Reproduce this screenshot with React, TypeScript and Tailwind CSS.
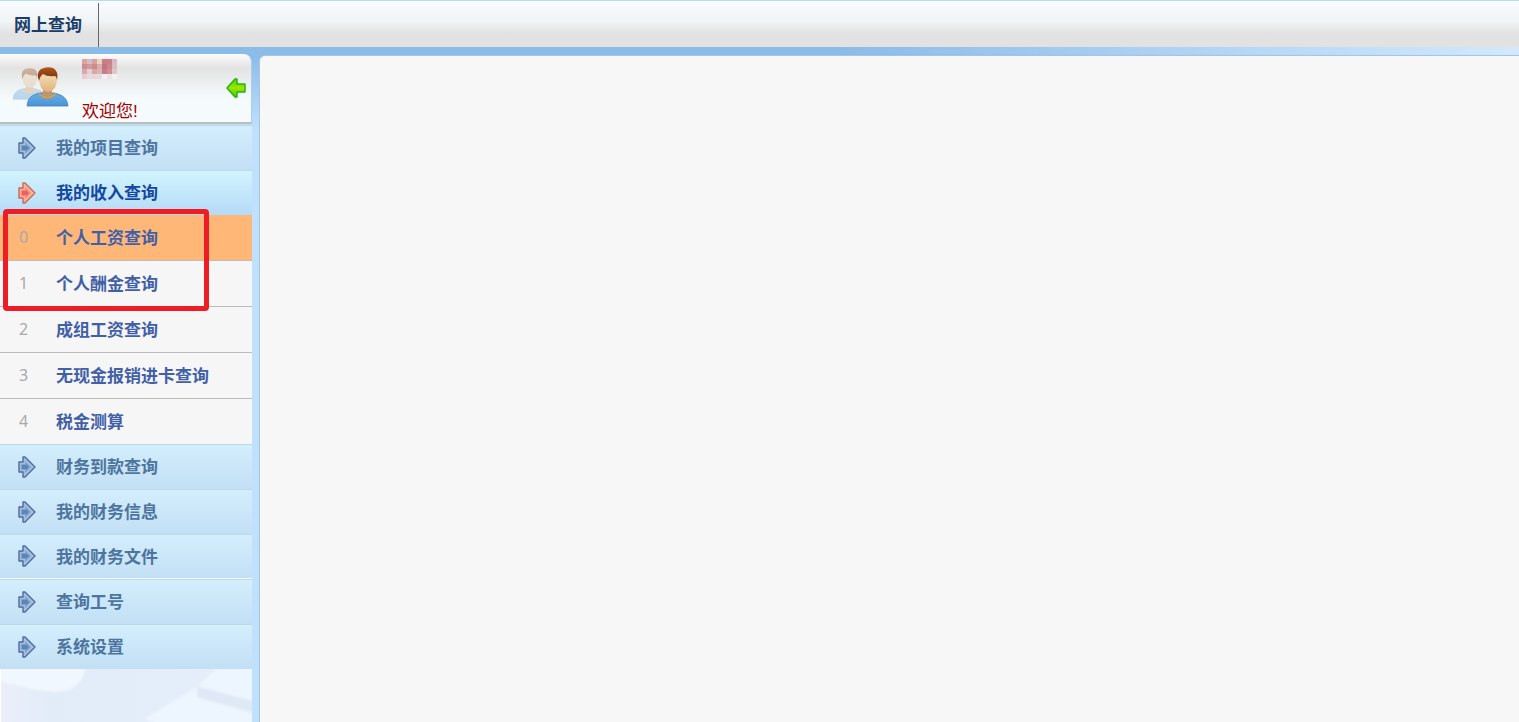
import React, { useState } from 'react';
import { clsx } from 'clsx';

interface MenuGroup {
  label: string;
  children?: string[];
  className?: string;
}

const menu: MenuGroup[] = [
  { label: '我的项目查询' },
  {
    label: '我的收入查询',
    children: ['个人工资查询', '个人酬金查询', '成组工资查询', '无现金报销进卡查询', '税金测算'],
  },
  { label: '财务到款查询' },
  { label: '我的财务信息' },
  { label: '我的财务文件', className: 'border-b border-b-white' },
  { label: '查询工号' },
  { label: '系统设置' },
];

// blurred name, one entry per 5px block
const nameBlocks = [
  ['#dba5a0', '#d6bcc5', '#d3a3a3', '#e8d3c4', '#cb7d84', '#cc7f88', '#dab9c0'],
  ['#cb8d8f', '#cf9ba1', '#cb8d84', '#d9aeb0', '#c4737f', '#c9868c', '#d9bdc3'],
  ['#d6a9b4', '#e6ced2', '#d5a9a9', '#dcb4b0', '#c97b88', '#cf8f94', '#dfc6ca'],
  ['#e8cdd0', '#ead9d9', '#ead6da', '#e8d9db', '#f3f0f1', '#ece3e4', '#f3f1f1'],
];

const MosaicName = () => (
  <svg width="35" height="20" viewBox="0 0 35 20" shapeRendering="crispEdges" aria-hidden="true">
    {nameBlocks.map((row, y) =>
      row.map((color, x) => (
        <rect key={`${x}-${y}`} x={x * 5} y={y * 5} width="5" height="5" fill={color} />
      ))
    )}
  </svg>
);

const Person = () => (
  <>
    <path d="M0 39 C1 31 4 28 13 26 L27 26 C36 28 40 31 41 39 Z" fill="url(#shirt)" stroke="#3d80bd" strokeWidth="0.8" />
    <path d="M12 26 Q20 33 29 26 L29 28 Q20 35 12 28Z" fill="#f39a1c" />
    <path d="M16 21 H25 V27 Q20 31 16 27Z" fill="#c9935f" />
    <path d="M12 9 Q12 3 20 3 Q30 3 30 10 Q30 18 27 22 Q21 28 15 22 Q12 18 12 9Z" fill="url(#face)" />
    <path d="M12 14 Q9 5 14 2 Q20 -1 26 1 Q32 4 30 14 Q30 10 28 9 Q20 10 16 7 Q13 9 12 14Z" fill="url(#hair)" />
  </>
);

const UsersIcon = () => (
  <svg width="56" height="42" viewBox="0 0 56 42" aria-hidden="true">
    <defs>
      <linearGradient id="shirt" x1="0" y1="0" x2="0" y2="1">
        <stop offset="0" stopColor="#68ace6" />
        <stop offset="1" stopColor="#4b94d3" />
      </linearGradient>
      <linearGradient id="hair" x1="0" y1="0" x2="0" y2="1">
        <stop offset="0" stopColor="#b0561c" />
        <stop offset="1" stopColor="#712c08" />
      </linearGradient>
      <linearGradient id="face" x1="0" y1="0" x2="0" y2="1">
        <stop offset="0" stopColor="#f9e5c2" />
        <stop offset="1" stopColor="#dfb27b" />
      </linearGradient>
    </defs>
    <g opacity="0.35" transform="translate(0 2) scale(.8)">
      <Person />
    </g>
    <g transform="translate(14 1)">
      <Person />
    </g>
  </svg>
);

const BackArrow = () => (
  <svg width="20" height="20" viewBox="0 0 20 20" aria-hidden="true">
    <defs>
      <linearGradient id="green" x1="0" y1="0" x2="0" y2="1">
        <stop offset="0" stopColor="#4fd400" />
        <stop offset="0.5" stopColor="#a0e600" />
        <stop offset="1" stopColor="#48c900" />
      </linearGradient>
    </defs>
    <path d="M1 10 L9 1 H11 V6 H19 V14 H11 V19 H9Z" fill="url(#green)" stroke="#22b518" strokeWidth="1.5" strokeLinejoin="round" />
  </svg>
);

const MenuArrow = ({ active }: { active: boolean }) => (
  <svg width="18" height="22" viewBox="0 0 18 22" className="mb-px" aria-hidden="true">
    <path
      d="M1 6 H5 V1 H7 L17 11 L7 21 H5 V16 H1Z"
      fill={active ? '#f5b3a3' : '#a3bfda'}
      stroke={active ? '#cc6a50' : '#4d6ba3'}
      strokeWidth="1.4"
      strokeLinejoin="round"
    />
    <path d="M3 8 H7 V5 L13 11 L7 17 V14 H3Z" fill={active ? '#f38b7c' : '#81a3cb'} />
    <path d="M4 9 H8 V8 L11 11 L8 14 V13 H4Z" fill={active ? '#f25f58' : '#5a85ba'} />
  </svg>
);

const Sidebar: React.FC = () => {
  const [openGroup, setOpenGroup] = useState('我的收入查询');
  const [selected, setSelected] = useState('个人工资查询');

  return (
    <aside className="flex w-[252px] shrink-0 flex-col bg-[#e6f0fb]">
      <div className="flex border-b border-[#bfe0ee] bg-[#8bbbe7]">
        <div className="flex h-[70px] flex-1 rounded-tr-lg border-r border-b-2 border-r-[#a9cdee] border-b-[#b9bdbf] bg-linear-to-b from-[#fcfcfc] via-[#e3e3e3] via-20% to-[#f5fafc] to-65% pl-[13px]">
          <div className="pt-3">
            <UsersIcon />
          </div>
          <div className="flex flex-1 flex-col justify-between pl-[13px] pt-[5px] text-[17px] leading-5 text-[#a40000]">
            <MosaicName />
            <span>欢迎您!</span>
          </div>
          <button type="button" aria-label="收起菜单" className="mr-[5px] self-center">
            <BackArrow />
          </button>
        </div>
      </div>

      <nav className="relative">
        {menu.map((group) => {
          const active = group.label === openGroup;
          return (
            <div key={group.label} className="last:-mb-px">
              <button
                type="button"
                onClick={() => setOpenGroup(active ? '' : group.label)}
                className={clsx(
                  'flex h-[45px] w-full items-center gap-5 border-t border-t-[#bcd8e4] bg-linear-to-b pl-[18px] text-[17px] font-bold',
                  active ? 'from-[#d2f4ff] to-[#b5daf6] text-[#15489f]' : 'from-[#d3eefd] to-[#c3dff4] text-[#4d759f]',
                  group.className
                )}
              >
                <MenuArrow active={active} />
                <span className="pt-0.5">{group.label}</span>
              </button>
              {active && group.children && (
                <ul className="divide-y divide-[#bcbcbc]">
                  {group.children.map((child, index) => (
                    <li key={child}>
                      <a
                        href="#"
                        onClick={() => setSelected(child)}
                        className={clsx(
                          'flex h-[45px] items-center text-[17px] font-bold text-[#4160a7]',
                          selected === child ? 'bg-[#ffb777]' : 'bg-[#f6f6f6]'
                        )}
                      >
                        <span className="w-14 pb-0.5 pl-[19px] font-['Noto_Sans'] text-[16px] font-normal text-[#a9a9a9]">{index}</span>
                        <span className="pt-0.5">{child}</span>
                      </a>
                    </li>
                  ))}
                </ul>
              )}
            </div>
          );
        })}
        {/* highlight frame over the first two entries */}
        <div className="pointer-events-none absolute left-[3px] top-[84px] h-[102px] w-[206px] rounded-sm border-5 border-[#ee1c25]" />
      </nav>

      <div className="relative min-h-0 flex-1 overflow-hidden">
        <svg width="100%" height="100%" viewBox="0 0 252 54" preserveAspectRatio="xMinYMin slice" aria-hidden="true">
          <defs>
            <linearGradient id="paper">
              <stop offset="0" stopColor="#eceefa" />
              <stop offset="0.2" stopColor="#e2ecf9" />
              <stop offset="1" stopColor="#e5eefa" />
            </linearGradient>
            <filter id="soft">
              <feGaussianBlur stdDeviation="1.2" />
            </filter>
          </defs>
          <rect width="252" height="54" fill="url(#paper)" />
          <g filter="url(#soft)">
            <path d="M0 -5 H86 Q84 22 55 23 Q35 22 0 12Z" fill="#f0f7fe" />
            <path d="M218 -2 H256 V58 H165 L144 50 L197 18Z" fill="#edf5fe" />
            <path d="M197 17 L256 33 V45 L197 28Z" fill="#dfe9f6" />
          </g>
          <path d="M0 0 H1 V54 H0Z" fill="#fff" />
        </svg>
      </div>
    </aside>
  );
};

export default function App() {
  return (
    <div className="flex h-screen flex-col bg-[#c0e0fe] font-['Liberation_Sans','Noto_Sans_CJK_SC',sans-serif]">
      <header className="flex h-[47px] shrink-0 border-t border-[#b5dbf8] bg-linear-to-b from-[#f9fcfe] via-[#f0f4f5] via-45% to-[#e2e2e2] to-70% pt-0.5">
        <h1 className="flex items-center border-r border-[#666] pl-3.5 pr-4 pt-0.5 text-[17px] font-bold text-[#193e6b]">网上查询</h1>
      </header>
      <div className="h-[7px] shrink-0 bg-linear-to-r from-[#8bbbe7] from-55% via-[#b2d5f5] via-80% to-[#d3e8fb]" />
      <div className="flex min-h-0 flex-1">
        <Sidebar />
        <div className="w-[7px] shrink-0 bg-linear-to-b from-[#8bbbe7] to-[#c0e0fe] to-[75px]" />
        <div className="flex flex-1 bg-linear-to-r from-[#8bbbe7] from-50% to-[#d3e8fb] pt-px">
          <main className="flex-1 rounded-tl-md border-l border-t border-[#a3c6e6] bg-[#f7f7f7]" />
        </div>
      </div>
    </div>
  );
}
